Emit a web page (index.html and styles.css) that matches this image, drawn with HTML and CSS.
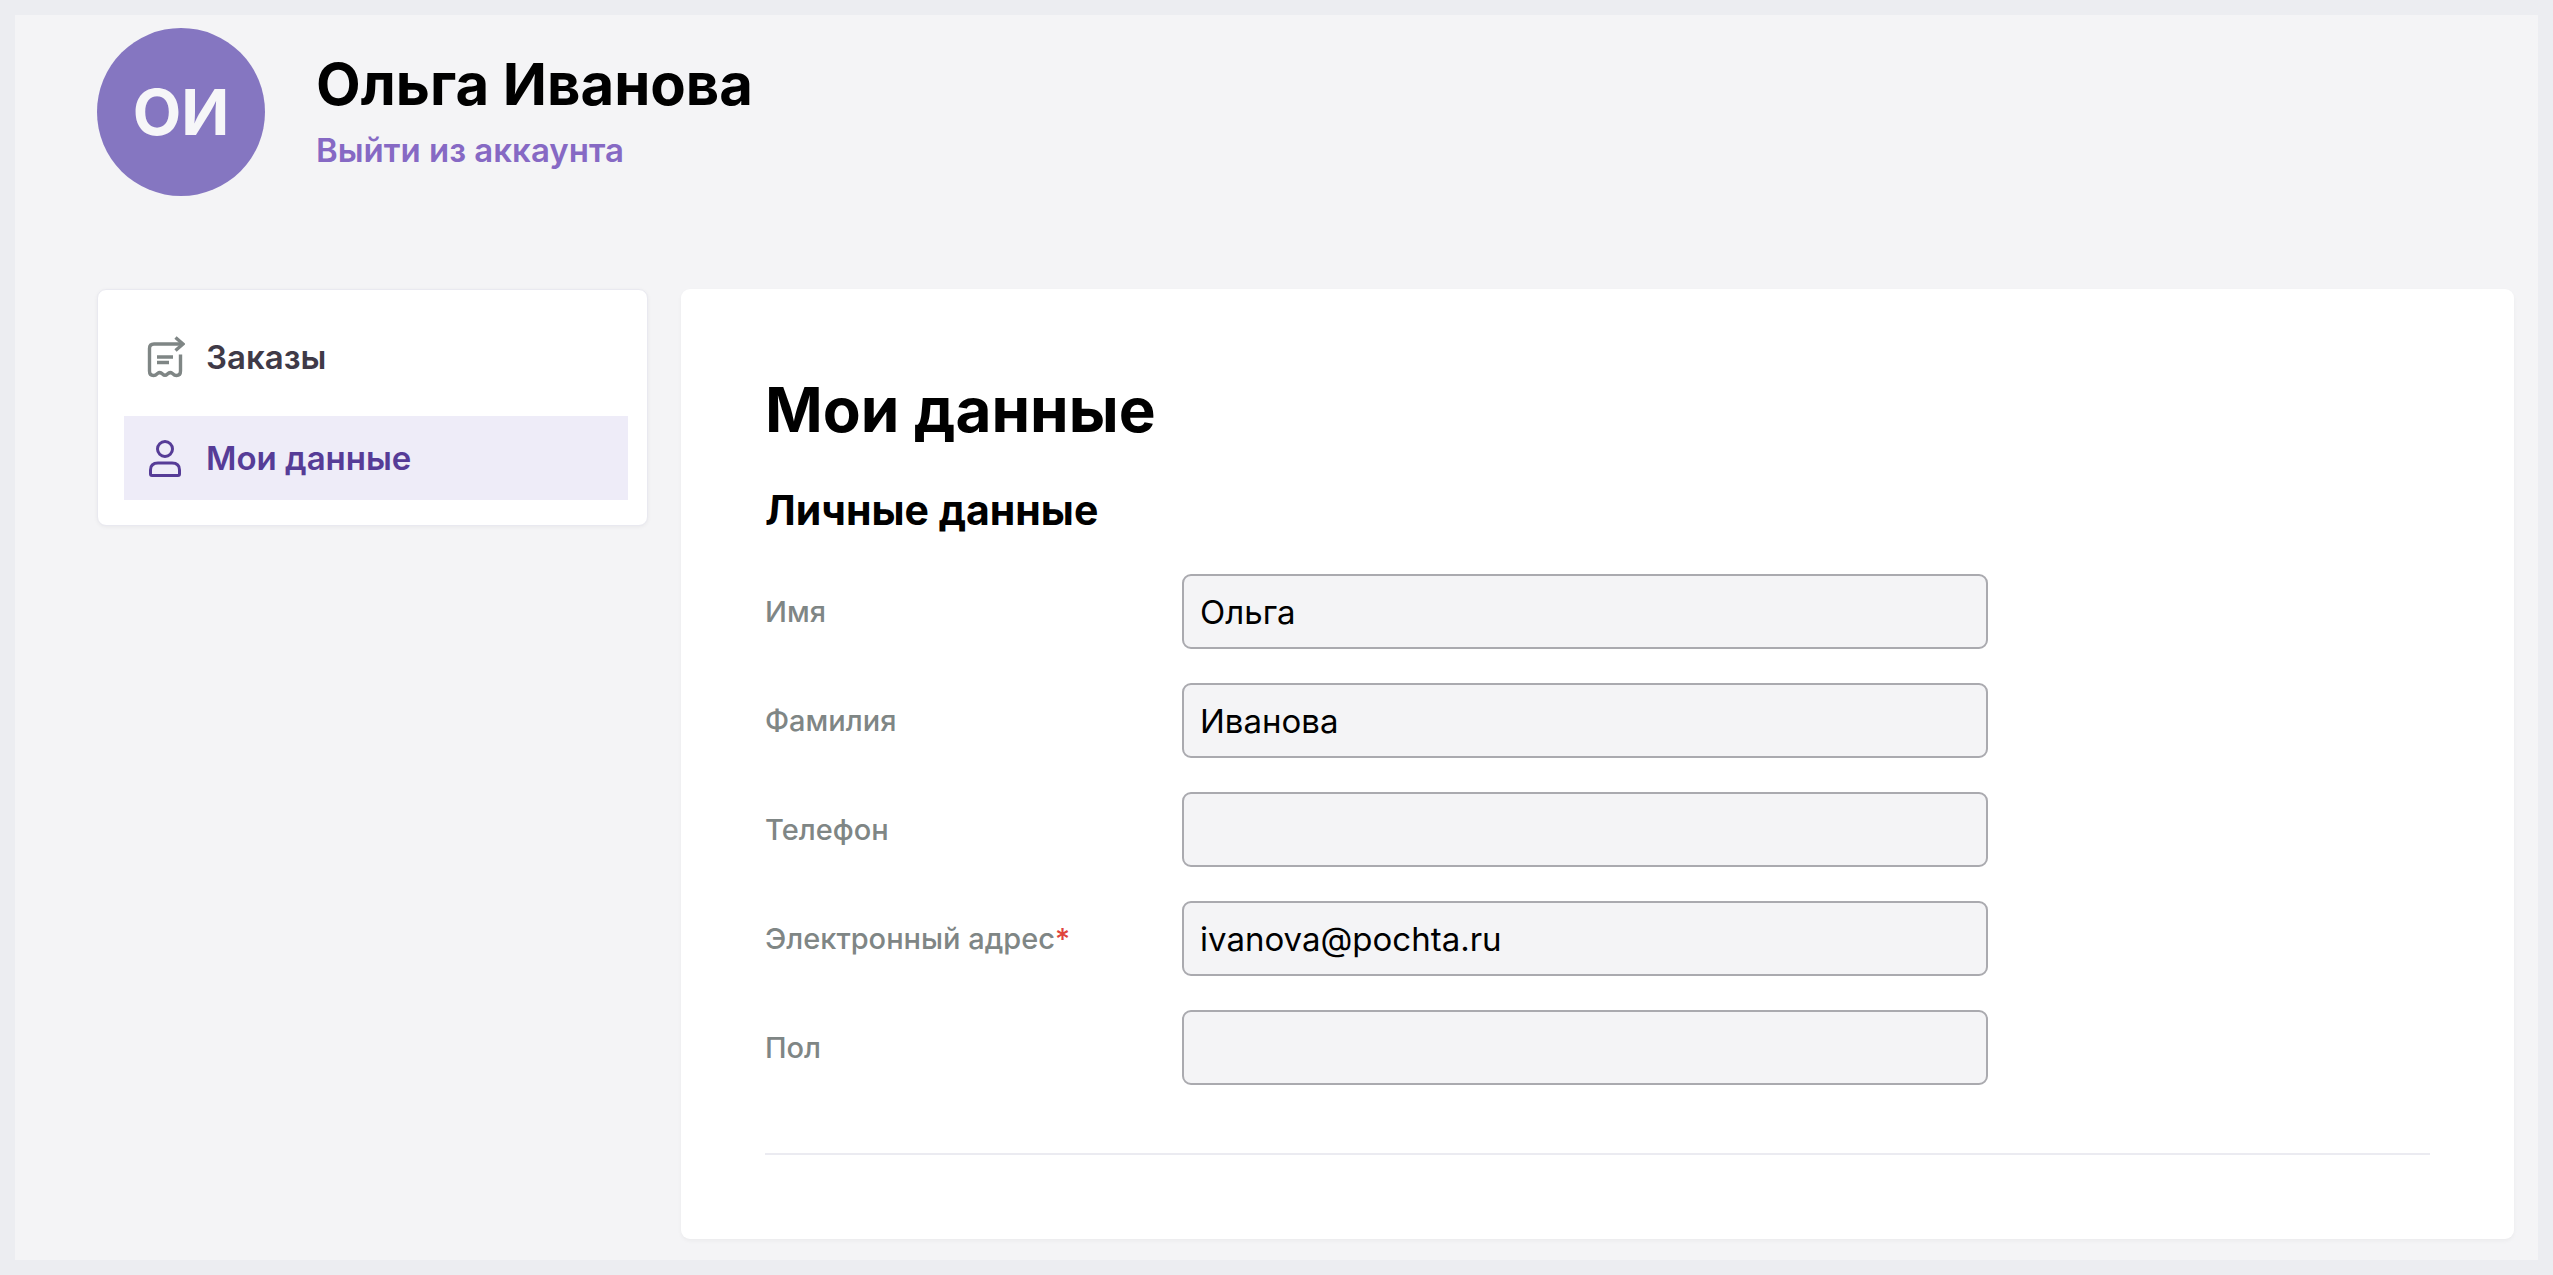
FILE: index.html
```html
<!DOCTYPE html>
<html lang="ru">
<head>
<meta charset="utf-8">
<meta name="viewport" content="width=device-width, initial-scale=1">
<title>Мои данные</title>
<link rel="stylesheet" href="styles.css">
</head>
<body>
<div class="page">
  <header class="profile">
    <div class="avatar">ОИ</div>
    <div class="profile-info">
      <div class="profile-name">Ольга Иванова</div>
      <a class="logout" href="#">Выйти из аккаунта</a>
    </div>
  </header>
  <div class="layout">
    <nav class="menu">
      <a class="menu-item" href="#">
        <svg class="menu-icon" viewBox="0 0 40 44" fill="none" stroke="currentColor" stroke-width="3.400" aria-hidden="true">
          <path d="M38 9H9Q4.500 9 4.500 13.500V36Q4.500 40.500 8.500 40.500Q10.500 40.500 12.500 38.500Q15 36.500 17.500 39Q20 41.500 22.500 39Q25 36.500 27.500 38.500Q29.500 40.500 31.500 40.500Q35.500 40.500 35.500 36V19.500"/>
          <path d="M30.500 2.500L38 9L30.500 15.500"/>
          <path d="M12 22H28M12 27.500H24"/>
        </svg>
        <span>Заказы</span>
      </a>
      <a class="menu-item active" href="#" aria-current="page">
        <svg class="menu-icon" viewBox="0 0 40 44" fill="none" stroke="currentColor" stroke-width="3" aria-hidden="true">
          <circle cx="20" cy="13" r="7.500"/>
          <path d="M13 27H27Q34.500 27 34.500 34V38Q34.500 39.500 33 39.500H7Q5.500 39.500 5.500 38V34Q5.500 27 13 27Z"/>
        </svg>
        <span>Мои данные</span>
      </a>
    </nav>
    <main class="card">
      <h1 class="title">Мои данные</h1>
      <form class="form">
        <h2 class="subtitle">Личные данные</h2>
        <div class="field">
          <label class="label" for="first-name">Имя</label>
          <input class="input" id="first-name" type="text" value="Ольга">
        </div>
        <div class="field">
          <label class="label" for="last-name">Фамилия</label>
          <input class="input" id="last-name" type="text" value="Иванова">
        </div>
        <div class="field">
          <label class="label" for="phone">Телефон</label>
          <input class="input" id="phone" type="tel">
        </div>
        <div class="field">
          <label class="label" for="email">Электронный адрес<span class="required">*</span></label>
          <input class="input" id="email" type="email" value="ivanova@pochta.ru" required>
        </div>
        <div class="field">
          <label class="label" for="gender">Пол</label>
          <input class="input" id="gender" type="text">
        </div>
      </form>
    </main>
  </div>
</div>
</body>
</html>
```
FILE: styles.css
```css
* {
  box-sizing: border-box;
}

body {
  margin: 0;
  padding: 15px;
  background: #ecedf1;
  color: #000;
  font-family: Inter, "Liberation Sans", sans-serif;
}

.page {
  padding: 13px 24px 21px 82px;
  background: #f4f4f6;
}

.profile {
  display: flex;
  gap: 51px;
  margin-bottom: 93px;
}

.avatar {
  display: flex;
  align-items: center;
  justify-content: center;
  width: 168px;
  height: 168px;
  border-radius: 50%;
  background: #8576c1;
  color: #f6f6f8;
  font-size: 63px;
  font-weight: 700;
}

.profile-info {
  display: flex;
  flex-direction: column;
  align-items: flex-start;
  padding-top: 20px;
}

.profile-name {
  font-size: 58px;
  font-weight: 700;
  line-height: 72px;
}

.logout {
  color: #8669c4;
  font-size: 33px;
  font-weight: 600;
  line-height: 61px;
  text-decoration: none;
}

.layout {
  display: grid;
  grid-template-columns: 551px 1fr;
  align-items: start;
  gap: 33px;
}

.menu {
  display: flex;
  flex-direction: column;
  gap: 17px;
  padding: 25px 19px 25px 26px;
  border: 1px solid #e9e9f0;
  border-radius: 9px;
  background: #fff;
  box-shadow: 0 1px 4px rgba(0, 0, 0, 0.05);
}

.menu-item {
  display: flex;
  align-items: center;
  gap: 21px;
  height: 84px;
  padding: 0 21px;
  color: #3f3a47;
  font-size: 33px;
  font-weight: 600;
  text-decoration: none;
}

.menu-icon {
  width: 40px;
  height: 44px;
  color: #7f8685;
}

.active {
  background: #eeecf8;
  color: #563c97;
}

.active .menu-icon {
  color: #563c97;
}

.card {
  padding: 84px;
  border-radius: 9px;
  background: #fff;
  box-shadow: 0 2px 4px rgba(0, 0, 0, 0.04);
}

.title {
  margin: 0 0 34px;
  font-size: 62px;
  font-weight: 700;
  line-height: 74px;
}

.form {
  display: flex;
  flex-direction: column;
  gap: 34px;
  padding-bottom: 68px;
  border-bottom: 2px solid #ebebf1;
}

.subtitle {
  margin: 0;
  font-size: 41px;
  font-weight: 700;
  line-height: 59px;
}

.field {
  display: grid;
  grid-template-columns: 417px minmax(0, 806px);
  align-items: center;
}

.label {
  color: #7f8685;
  font-size: 29px;
  font-weight: 500;
}

.required {
  color: #e0443c;
}

.input {
  width: 100%;
  height: 75px;
  padding: 0 16px;
  border: 2px solid #aaaaaf;
  border-radius: 9px;
  background: #f4f4f6;
  color: #000;
  font-family: inherit;
  font-size: 33px;
}
```
